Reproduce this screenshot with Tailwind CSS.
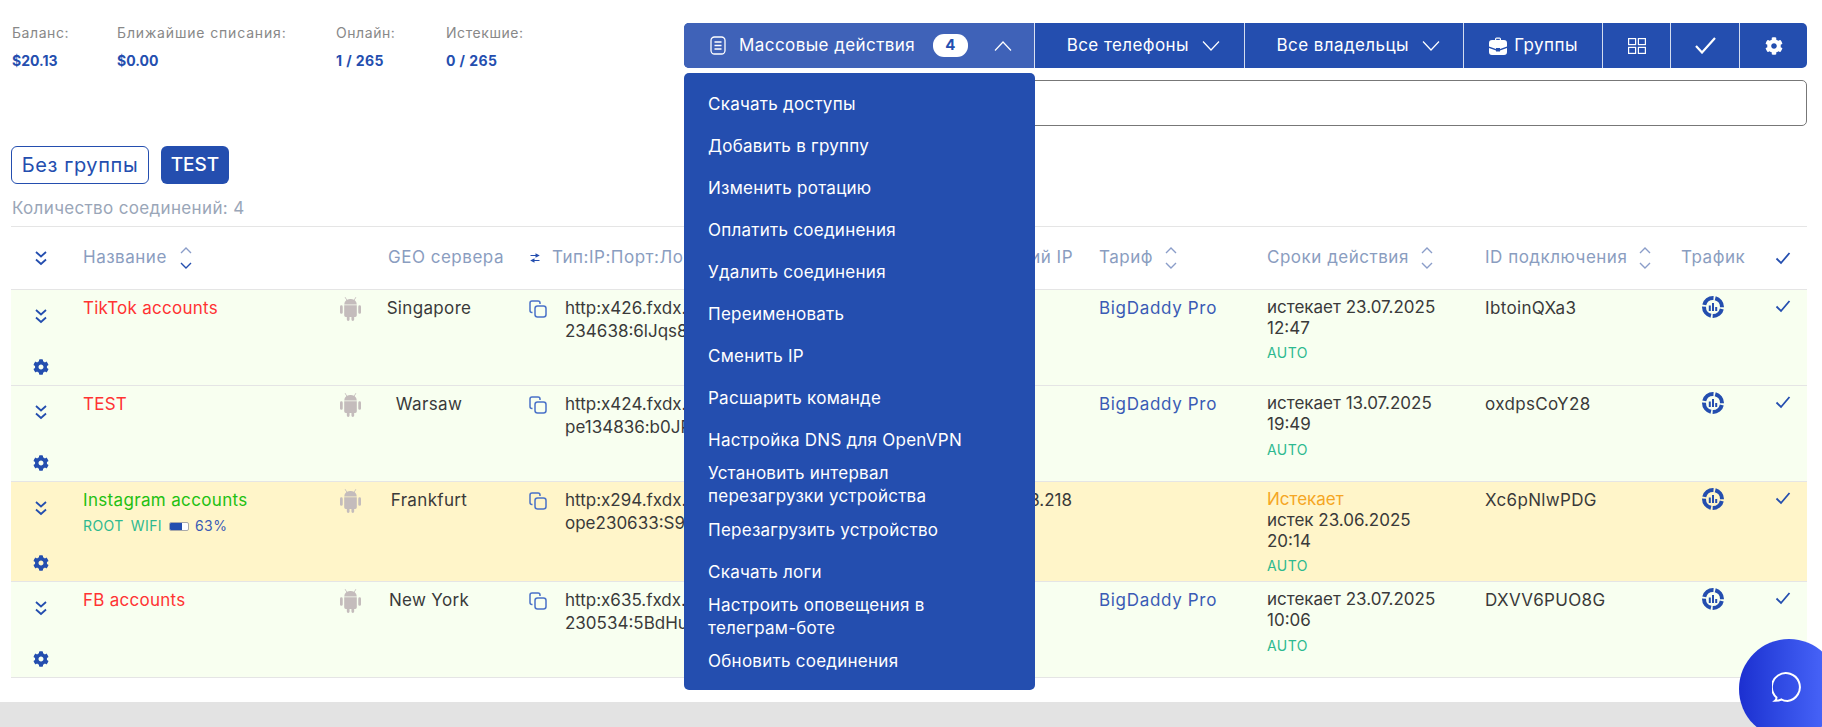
<!DOCTYPE html>
<html lang="ru">
<head>
    <meta charset="UTF-8">
    <meta name="viewport" content="width=device-width, initial-scale=1.0">
    <title>Соединения</title>
    <script src="https://cdn.jsdelivr.net/npm/@tailwindcss/browser@4"></script>
</head>
<body class="h-[727px] overflow-hidden bg-[#e3e3e3] font-['Inter','Noto_Sans',sans-serif] text-[#3a3a3a]">

<svg class="hidden">
    <symbol id="dbl" viewBox="0 0 14 16"><path d="M2 2l5 4.500L12 2M2 9.500l5 4.500 5-4.500" fill="none" stroke="currentColor" stroke-width="1.800"/></symbol>
    <symbol id="gear" viewBox="0 0 512 512"><path fill="currentColor" d="M487.400 315.700l-42.600-24.600c4.300-23.200 4.300-47 0-70.200l42.600-24.600c4.900-2.800 7.100-8.600 5.500-14-11.100-35.600-30-67.800-54.700-94.600-3.800-4.100-10-5.100-14.800-2.300L380.800 110c-17.900-15.400-38.500-27.300-60.800-35.100V25.800c0-5.600-3.900-10.500-9.400-11.700-36.700-8.200-74.300-7.800-109.200 0-5.500 1.200-9.400 6.100-9.400 11.700V75c-22.200 7.900-42.800 19.800-60.800 35.100L88.700 85.500c-4.900-2.800-11-1.900-14.800 2.300-24.700 26.700-43.600 58.900-54.700 94.600-1.700 5.400.6 11.200 5.500 14L67.300 221c-4.300 23.200-4.300 47 0 70.200l-42.600 24.600c-4.900 2.800-7.100 8.600-5.500 14 11.100 35.600 30 67.800 54.700 94.600 3.800 4.100 10 5.100 14.800 2.300l42.600-24.600c17.900 15.400 38.500 27.300 60.800 35.100v49.200c0 5.600 3.900 10.500 9.400 11.700 36.700 8.200 74.300 7.800 109.200 0 5.500-1.200 9.400-6.100 9.400-11.700v-49.200c22.200-7.900 42.800-19.800 60.800-35.100l42.600 24.600c4.900 2.800 11 1.900 14.800-2.300 24.700-26.700 43.600-58.900 54.700-94.600 1.500-5.500-.7-11.300-5.600-14.100zM256 336c-44.100 0-80-35.900-80-80s35.900-80 80-80 80 35.900 80 80-35.900 80-80 80z"/></symbol>
    <symbol id="android" viewBox="0 0 20 24"><path fill="currentColor" d="M5 1l1.800 2.600A7 7 0 0110 3a7 7 0 013.200.6L15 1l.6.4-1.700 2.600A5.600 5.600 0 0116 8.200H4A5.600 5.600 0 016.100 4L4.400 1.400zM4 9h12v9.500a1.500 1.500 0 01-1.500 1.500H13.500v2.500a1.300 1.300 0 01-2.600 0V20H9.100v2.500a1.300 1.300 0 01-2.600 0V20h-1A1.500 1.500 0 014 18.500zM1.300 9a1.300 1.300 0 011.300 1.300v5.400a1.300 1.300 0 01-2.600 0v-5.400A1.300 1.300 0 011.300 9zm17.400 0a1.300 1.300 0 011.300 1.300v5.400a1.300 1.300 0 01-2.600 0v-5.400A1.300 1.300 0 0118.700 9z"/></symbol>
    <symbol id="copy" viewBox="0 0 18 18"><g fill="none" stroke="currentColor" stroke-width="1.500"><rect x="6" y="6" width="11" height="11" rx="2.500"/><path d="M3.500 12.500h-.5A2 2 0 011 10.500V3a2 2 0 012-2h6a2 2 0 012 2v1"/></g></symbol>
    <symbol id="traffic" viewBox="0 0 22 22"><circle cx="11" cy="11" r="9" fill="none" stroke="currentColor" stroke-width="4" stroke-dasharray="12.400 1.740" stroke-dashoffset="-2"/><path fill="currentColor" d="M6.800 9.500h2v5.500h-2zM10 7h2v8h-2zM13.200 11h2v4h-2z"/></symbol>
    <symbol id="check" viewBox="0 0 16 14"><path d="M1.500 7.500l4.500 4.500L14.500 2" fill="none" stroke="currentColor" stroke-width="1.800"/></symbol>
    <symbol id="sort" viewBox="0 0 14 26"><path d="M2 8l5-5 5 5" fill="none" stroke="#8a9dc9" stroke-width="1.400"/><path d="M2 18l5 5 5-5" fill="none" stroke="currentColor" stroke-width="1.400"/></symbol>
</svg>

<div class="h-[702px] bg-white relative">
    <!-- верх: статистика и панель действий -->
    <div class="flex">
        <div class="w-[684px] h-[146px] flex items-start pt-[23px] pl-3 text-[14px]">
            <div class="w-[105px]"><p class="text-[#888] leading-[20px] tracking-[0.04em]">Баланс:</p><p class="mt-[8px] font-bold text-[#244eaf] leading-[20px]">$20.13</p></div>
            <div class="w-[219px]"><p class="text-[#888] leading-[20px] tracking-[0.06em]">Ближайшие списания:</p><p class="mt-[8px] font-bold text-[#244eaf] leading-[20px]">$0.00</p></div>
            <div class="w-[110px]"><p class="text-[#888] leading-[20px] tracking-[0.04em]">Онлайн:</p><p class="mt-[8px] font-bold text-[#244eaf] leading-[20px] tracking-[0.03em]">1 / 265</p></div>
            <div><p class="text-[#888] leading-[20px] tracking-[0.04em]">Истекшие:</p><p class="mt-[8px] font-bold text-[#244eaf] leading-[20px] tracking-[0.03em]">0 / 265</p></div>
        </div>
        <div class="w-[1123px] pt-[23px]">
            <div class="flex h-[45px] bg-[#244eaf] rounded-[5px] text-white text-[17px] tracking-[0.025em] divide-x divide-white/80">
                <div class="w-[351px] bg-[#3f62b8] rounded-l-[5px] flex items-center pl-[26px]">
                    <svg class="w-[16px] h-[19px]" viewBox="0 0 16 19" fill="none" stroke="white" stroke-width="1.300"><rect x="1" y="1" width="14" height="17" rx="3.500"/><path d="M4.500 6h7M4.500 9.500h7M4.500 13h7"/></svg>
                    <span class="ml-[13px] w-[194px]">Массовые действия</span>
                    <span class="w-[35px] h-[23px] rounded-[11px] bg-white text-[#244eaf] text-[15px] font-bold flex items-center justify-center">4</span>
                    <svg class="ml-[26px] w-[18px] h-[10px]" viewBox="0 0 18 10" fill="none" stroke="white" stroke-width="1.200"><path d="M1 9.500L9 1l8 8.500"/></svg>
                </div>
                <div class="w-[210px] flex items-center pl-[32px]">
                    <span class="w-[135px]">Все телефоны</span>
                    <svg class="w-[18px] h-[10px]" viewBox="0 0 18 10" fill="none" stroke="white" stroke-width="1.200"><path d="M1 .5L9 9l8-8.500"/></svg>
                </div>
                <div class="w-[220px] flex items-center pl-[32px]">
                    <span class="w-[145px]">Все владельцы</span>
                    <svg class="w-[18px] h-[10px]" viewBox="0 0 18 10" fill="none" stroke="white" stroke-width="1.200"><path d="M1 .5L9 9l8-8.500"/></svg>
                </div>
                <div class="w-[139px] flex items-center pl-[25px]">
                    <svg class="w-[18px] h-[18px]" viewBox="0 0 18 18"><path fill="white" d="M6 3V2a1.500 1.500 0 011.500-1.500h3A1.500 1.500 0 0112 2v1h3a3 3 0 013 3v3.500l-7 2.500v-1H7v1L0 9.500V6a3 3 0 013-3zm1.200 0h3.600V1.800H7.200zM0 11l7 2.500v1h4v-1l7-2.500v4a3 3 0 01-3 3H3a3 3 0 01-3-3z"/></svg>
                    <span class="ml-[7px]">Группы</span>
                </div>
                <div class="w-[68px] flex items-center justify-center">
                    <svg class="w-[18px] h-[16px]" viewBox="0 0 18 16" fill="none" stroke="white" stroke-width="1.200"><rect x=".6" y=".6" width="7" height="6"/><rect x="10.400" y=".6" width="7" height="6"/><rect x=".6" y="9.400" width="7" height="6"/><rect x="10.400" y="9.400" width="7" height="6"/></svg>
                </div>
                <div class="w-[69px] flex items-center justify-center">
                    <svg class="w-[21px] h-[17px]" viewBox="0 0 21 17" fill="none" stroke="white" stroke-width="2.200"><path d="M1 9l6 6.500L20 1"/></svg>
                </div>
                <div class="w-[67px] flex items-center justify-center">
                    <svg class="w-[18px] h-[18px] text-white"><use href="#gear"/></svg>
                </div>
            </div>
            <div class="mt-[12px] h-[46px] border border-[#777] rounded-[5px] bg-white"></div>
        </div>
    </div>

    <!-- группы -->
    <div class="flex gap-3 pl-[11px]">
        <button class="h-[38px] w-[138px] border border-[#244eaf] rounded-[6px] text-[#244eaf] text-[20px] tracking-[0.03em]">Без группы</button>
        <button class="h-[38px] w-[68px] bg-[#244eaf] rounded-[6px] text-white text-[19px] font-medium">TEST</button>
    </div>
    <p class="mt-[13px] ml-3 text-[17px] tracking-[0.02em] leading-[23px] text-[#9aa6b8]">Количество соединений: 4</p>

    <!-- таблица -->
    <div class="w-[1796px] ml-[11px] mt-[6px] border-t border-[#e5e5e5]">
        <div class="grid grid-cols-[60px_259px_46px_146px_565px_168px_218px_196px_90px_48px] h-[63px] items-center text-[17px] tracking-[0.03em] text-[#8a9dc0] border-b border-[#e5e5e5]">
            <div class="flex justify-center"><svg class="w-[14px] h-[16px] text-[#244eaf]"><use href="#dbl"/></svg></div>
            <div class="pl-3 flex items-center gap-[12px]">Название <svg class="w-[14px] h-[26px] text-[#244eaf]"><use href="#sort"/></svg></div>
            <div></div>
            <div class="pl-3">GEO сервера</div>
            <div class="pl-[8px] flex items-center justify-between pr-[14px]">
                <span class="flex items-center gap-[12px]">
                    <svg class="w-[10px] h-[10px] text-[#244eaf]" viewBox="0 0 10 10"><path fill="currentColor" d="M.5 2h5v1h-5zM5.500.3L9.800 2.500 5.500 4.700zM4.500 7h5v1h-5zM4.500 5.300L.2 7.500l4.300 2.200z"/></svg>
                    Тип:IP:Порт:Логин:Пароль
                </span>
                <span>Внешний IP</span>
            </div>
            <div class="pl-3 flex items-center gap-[11px]">Тариф <svg class="w-[14px] h-[26px] text-[#8a9dc9]"><use href="#sort"/></svg></div>
            <div class="pl-3 flex items-center gap-[11px]">Сроки действия <svg class="w-[14px] h-[26px] text-[#8a9dc9]"><use href="#sort"/></svg></div>
            <div class="pl-3 flex items-center gap-[11px]">ID подключения <svg class="w-[14px] h-[26px] text-[#8a9dc9]"><use href="#sort"/></svg></div>
            <div class="pl-3">Трафик</div>
            <div class="flex justify-center"><svg class="w-[16px] h-[14px] text-[#244eaf]"><use href="#check"/></svg></div>
        </div>

        <!-- TikTok accounts -->
        <div class="grid grid-cols-[60px_259px_46px_146px_565px_168px_218px_196px_90px_48px] h-[96px] bg-[#f8fff0] border-b border-[#e5e5e5] text-[17px]">
            <div class="flex flex-col items-center justify-between pt-[18px] pb-[10px]">
                <svg class="w-[14px] h-[16px] text-[#244eaf]"><use href="#dbl"/></svg>
                <svg class="w-[16px] h-[16px] text-[#244eaf]"><use href="#gear"/></svg>
            </div>
            <div class="pl-3 pt-[7px] leading-[23px] tracking-[0.015em] text-[#ff3333]">TikTok accounts</div>
            <div class="pt-[5px] pl-[10px]"><svg class="w-[21px] h-[27px] text-[#c4bcbc]"><use href="#android"/></svg></div>
            <div class="pt-[7px] leading-[23px] tracking-[0.02em] w-[106px] text-center">Singapore</div>
            <div class="flex pt-[7px] pl-[7px]">
                <svg class="w-[18px] h-[18px] mt-[3px] text-[#4a72c8] shrink-0"><use href="#copy"/></svg>
                <div class="ml-[18px] leading-[23px] whitespace-nowrap">http:x426.fxdx.in:<br>234638:6lJqs8</div>
            </div>
            <div class="pl-3 pt-[7px] leading-[23px] tracking-[0.04em] text-[#3a5bb5]">BigDaddy Pro</div>
            <div class="pl-3 pt-[7px]"><p class="leading-[21px]">истекает 23.07.2025<br>12:47</p><p class="mt-[2px] text-[14px] tracking-[0.03em] leading-[24px] text-[#2db98f]">AUTO</p></div>
            <div class="pl-3 pt-[7px] leading-[23px] tracking-[0.02em]">IbtoinQXa3</div>
            <div class="pt-[6px] pl-[33px]"><svg class="w-[22px] h-[22px] text-[#244eaf]"><use href="#traffic"/></svg></div>
            <div class="flex justify-center pt-[9px]"><svg class="w-[16px] h-[14px] text-[#244eaf]"><use href="#check"/></svg></div>
        </div>

        <!-- TEST -->
        <div class="grid grid-cols-[60px_259px_46px_146px_565px_168px_218px_196px_90px_48px] h-[96px] bg-[#f8fff0] border-b border-[#e5e5e5] text-[17px]">
            <div class="flex flex-col items-center justify-between pt-[18px] pb-[10px]">
                <svg class="w-[14px] h-[16px] text-[#244eaf]"><use href="#dbl"/></svg>
                <svg class="w-[16px] h-[16px] text-[#244eaf]"><use href="#gear"/></svg>
            </div>
            <div class="pl-3 pt-[7px] leading-[23px] tracking-[0.015em] text-[#ff3333]">TEST</div>
            <div class="pt-[5px] pl-[10px]"><svg class="w-[21px] h-[27px] text-[#c4bcbc]"><use href="#android"/></svg></div>
            <div class="pt-[7px] leading-[23px] tracking-[0.02em] w-[106px] text-center">Warsaw</div>
            <div class="flex pt-[7px] pl-[7px]">
                <svg class="w-[18px] h-[18px] mt-[3px] text-[#4a72c8] shrink-0"><use href="#copy"/></svg>
                <div class="ml-[18px] leading-[23px] whitespace-nowrap">http:x424.fxdx.in:<br>pe134836:b0JP</div>
            </div>
            <div class="pl-3 pt-[7px] leading-[23px] tracking-[0.04em] text-[#3a5bb5]">BigDaddy Pro</div>
            <div class="pl-3 pt-[7px]"><p class="leading-[21px]">истекает 13.07.2025<br>19:49</p><p class="mt-[3px] text-[14px] tracking-[0.03em] leading-[24px] text-[#2db98f]">AUTO</p></div>
            <div class="pl-3 pt-[7px] leading-[23px] tracking-[0.02em]">oxdpsCoY28</div>
            <div class="pt-[6px] pl-[33px]"><svg class="w-[22px] h-[22px] text-[#244eaf]"><use href="#traffic"/></svg></div>
            <div class="flex justify-center pt-[9px]"><svg class="w-[16px] h-[14px] text-[#244eaf]"><use href="#check"/></svg></div>
        </div>

        <!-- Instagram accounts -->
        <div class="grid grid-cols-[60px_259px_46px_146px_565px_168px_218px_196px_90px_48px] h-[100px] bg-[#fff5c9] border-b border-[#e5e5e5] text-[17px]">
            <div class="flex flex-col items-center justify-between pt-[18px] pb-[10px]">
                <svg class="w-[14px] h-[16px] text-[#244eaf]"><use href="#dbl"/></svg>
                <svg class="w-[16px] h-[16px] text-[#244eaf]"><use href="#gear"/></svg>
            </div>
            <div class="pl-3 pt-[7px]">
                <p class="leading-[23px] tracking-[0.02em] text-[#22c012]">Instagram accounts</p>
                <p class="mt-[6px] flex items-center text-[14px] tracking-[0.03em] leading-[16px] text-[#2db98f]">
                    <span>ROOT</span><span class="ml-[7px]">WIFI</span>
                    <span class="ml-[7px] w-[20px] h-[9px] border border-[#aaa] rounded-[2px] bg-white overflow-hidden"><span class="block w-[12px] h-full bg-[#244eaf]"></span></span>
                    <span class="ml-[6px] text-[#3a5bb5]">63%</span>
                </p>
            </div>
            <div class="pt-[5px] pl-[10px]"><svg class="w-[21px] h-[27px] text-[#c4bcbc]"><use href="#android"/></svg></div>
            <div class="pt-[7px] leading-[23px] tracking-[0.02em] w-[106px] text-center">Frankfurt</div>
            <div class="flex pt-[7px] pl-[7px]">
                <svg class="w-[18px] h-[18px] mt-[3px] text-[#4a72c8] shrink-0"><use href="#copy"/></svg>
                <div class="ml-[18px] leading-[23px] whitespace-nowrap">http:x294.fxdx.in:<br>ope230633:S98</div>
                <div class="ml-auto pr-[15px] leading-[23px]">3.218</div>
            </div>
            <div></div>
            <div class="pl-3 pt-[7px]"><p class="leading-[21px] text-[#f5a623]">Истекает</p><p class="leading-[21px]">истек 23.06.2025<br>20:14</p><p class="mt-[2px] text-[14px] tracking-[0.03em] leading-[24px] text-[#2db98f]">AUTO</p></div>
            <div class="pl-3 pt-[7px] leading-[23px] tracking-[0.02em]">Xc6pNlwPDG</div>
            <div class="pt-[6px] pl-[33px]"><svg class="w-[22px] h-[22px] text-[#244eaf]"><use href="#traffic"/></svg></div>
            <div class="flex justify-center pt-[9px]"><svg class="w-[16px] h-[14px] text-[#244eaf]"><use href="#check"/></svg></div>
        </div>

        <!-- FB accounts -->
        <div class="grid grid-cols-[60px_259px_46px_146px_565px_168px_218px_196px_90px_48px] h-[96px] bg-[#f8fff0] border-b border-[#e5e5e5] text-[17px]">
            <div class="flex flex-col items-center justify-between pt-[18px] pb-[10px]">
                <svg class="w-[14px] h-[16px] text-[#244eaf]"><use href="#dbl"/></svg>
                <svg class="w-[16px] h-[16px] text-[#244eaf]"><use href="#gear"/></svg>
            </div>
            <div class="pl-3 pt-[7px] leading-[23px] tracking-[0.015em] text-[#ff3333]">FB accounts</div>
            <div class="pt-[5px] pl-[10px]"><svg class="w-[21px] h-[27px] text-[#c4bcbc]"><use href="#android"/></svg></div>
            <div class="pt-[7px] leading-[23px] tracking-[0.02em] w-[106px] text-center">New York</div>
            <div class="flex pt-[7px] pl-[7px]">
                <svg class="w-[18px] h-[18px] mt-[3px] text-[#4a72c8] shrink-0"><use href="#copy"/></svg>
                <div class="ml-[18px] leading-[23px] whitespace-nowrap">http:x635.fxdx.in:<br>230534:5BdHu</div>
            </div>
            <div class="pl-3 pt-[7px] leading-[23px] tracking-[0.04em] text-[#3a5bb5]">BigDaddy Pro</div>
            <div class="pl-3 pt-[7px]"><p class="leading-[21px]">истекает 23.07.2025<br>10:06</p><p class="mt-[3px] text-[14px] tracking-[0.03em] leading-[24px] text-[#2db98f]">AUTO</p></div>
            <div class="pl-3 pt-[7px] leading-[23px] tracking-[0.02em]">DXVV6PUO8G</div>
            <div class="pt-[6px] pl-[33px]"><svg class="w-[22px] h-[22px] text-[#244eaf]"><use href="#traffic"/></svg></div>
            <div class="flex justify-center pt-[9px]"><svg class="w-[16px] h-[14px] text-[#244eaf]"><use href="#check"/></svg></div>
        </div>
    </div>

    <!-- выпадающее меню -->
    <div class="absolute left-[684px] top-[73px] w-[351px] h-[617px] bg-[#244eaf] rounded-[5px] pt-[10px] pb-[10px] pl-[24px] pr-[20px] text-white text-[17px] tracking-[0.015em] leading-[23px]">
        <div class="min-h-[42px] flex items-center">Скачать доступы</div>
        <div class="min-h-[42px] flex items-center">Добавить в группу</div>
        <div class="min-h-[42px] flex items-center">Изменить ротацию</div>
        <div class="min-h-[42px] flex items-center">Оплатить соединения</div>
        <div class="min-h-[42px] flex items-center">Удалить соединения</div>
        <div class="min-h-[42px] flex items-center">Переименовать</div>
        <div class="min-h-[42px] flex items-center">Сменить IP</div>
        <div class="min-h-[42px] flex items-center">Расшарить команде</div>
        <div class="min-h-[42px] flex items-center">Настройка DNS для OpenVPN</div>
        <div class="min-h-[42px] flex items-center py-px">Установить интервал<br>перезагрузки устройства</div>
        <div class="min-h-[42px] flex items-center">Перезагрузить устройство</div>
        <div class="min-h-[42px] flex items-center">Скачать логи</div>
        <div class="min-h-[42px] flex items-center py-px">Настроить оповещения в<br>телеграм-боте</div>
        <div class="min-h-[42px] flex items-center -mt-px">Обновить соединения</div>
    </div>
</div>

<!-- чат -->
<div class="fixed left-[1739px] top-[639px] w-[100px] h-[100px] rounded-full bg-gradient-to-r from-[#1c2fd0] to-[#4f6bff] flex items-center justify-center">
    <svg class="w-[31px] h-[32px] -ml-[3px] -mt-[2px]" viewBox="0 0 31 32" fill="none" stroke="white" stroke-width="2"><path d="M4.500 25.500A14 14 0 1115.500 29c-2.500 0-4.500-.5-6-1.500-1.500.8-4 1.300-6.500 1.300 1-.8 1.500-2 1.500-3.300z"/></svg>
</div>

</body>
</html>
